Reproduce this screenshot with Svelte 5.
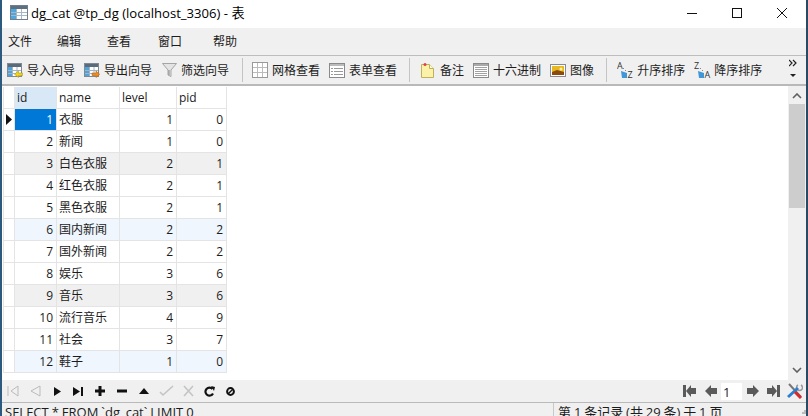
<script>
  const menus = ['文件', '编辑', '查看', '窗口', '帮助'];

  const rows = [
    [1, '衣服', 1, 0, ''],
    [2, '新闻', 1, 0, ''],
    [3, '白色衣服', 2, 1, 'gray'],
    [4, '红色衣服', 2, 1, ''],
    [5, '黑色衣服', 2, 1, ''],
    [6, '国内新闻', 2, 2, 'blue'],
    [7, '国外新闻', 2, 2, ''],
    [8, '娱乐', 3, 6, ''],
    [9, '音乐', 3, 6, 'gray'],
    [10, '流行音乐', 4, 9, ''],
    [11, '社会', 3, 7, ''],
    [12, '鞋子', 1, 0, 'blue']
  ];
</script>

{#snippet tableIcon(arrow)}
  <svg width="16" height="16" viewBox="0 0 16 16">
    <rect x="0.5" y="1.5" width="14" height="13" fill="#fff" stroke="#7d8a96" />
    <rect x="1" y="2" width="13" height="3" fill="#5a6b7c" />
    <rect x="1" y="5" width="4" height="9" fill="#4fa3d8" />
    <path d="M5.5 5v9M10 5v9M1 8.5h13M1 11.5h13" stroke="#9fb4c6" />
    {#if arrow === 'in'}
      <path d="M15.500 11h-4V9l-4 3.200 4 3.300v-2h4z" fill="#f5d313" stroke="#a08a10" stroke-width="0.5" />
    {:else}
      <path d="M8 11h4V9l3.700 3.200-3.700 3.300v-2H8z" fill="#f08a1d" stroke="#a85a10" stroke-width="0.5" />
    {/if}
  </svg>
{/snippet}

{#snippet sortIcon(first, last)}
  <svg width="17" height="18" viewBox="0 0 17 18">
    <path d="M4 10l6 2v5H5z" fill="#3f97d8" />
    <path d="M6 7.500h1M8 9.500h1" stroke="#888" />
    <text x="0" y="8" class="az">{first}</text>
    <text x="10.500" y="17" class="az">{last}</text>
  </svg>
{/snippet}

<div class="window">
  <header class="title">
    <svg width="18" height="15" viewBox="0 0 18 15">
      <rect x="0.5" y="0.5" width="17" height="14" fill="#fff" stroke="#6f7f8c" />
      <rect x="1" y="1" width="16" height="3" fill="#5d7080" />
      <rect x="1" y="4" width="5" height="10" fill="#4fa6dc" />
      <path d="M6.5 4v10M11.5 4v10M1 7.5h16M1 10.5h16" stroke="#a5b8c8" />
    </svg>
    <span>dg_cat @tp_dg (localhost_3306) - 表</span>
    <div class="controls">
      <svg width="10" height="10" viewBox="0 0 10 10"><path d="M0 5.5h10" stroke="#111" /></svg>
      <svg width="10" height="10" viewBox="0 0 10 10"><rect x="0.5" y="0.5" width="9" height="9" fill="none" stroke="#111" /></svg>
      <svg width="10" height="10" viewBox="0 0 10 10"><path d="M0 0l10 10M10 0L0 10" stroke="#111" /></svg>
    </div>
  </header>

  <nav class="menu">
    {#each menus as m}<span>{m}</span>{/each}
  </nav>

  <div class="toolbar">
    <div class="tool">{@render tableIcon('in')}导入向导</div>
    <div class="tool">{@render tableIcon('out')}导出向导</div>
    <div class="tool muted">
      <svg width="15" height="16" viewBox="0 0 15 16"><path d="M0.5 1.500h14L9 8v6.500L6 13V8z" fill="#e4e4e4" stroke="#a5a5a5" /><path d="M7 8v5" stroke="#888" /></svg>
      筛选向导
    </div>
    <i class="sep"></i>
    <div class="tool">
      <svg width="16" height="16" viewBox="0 0 16 16"><rect x="0.5" y="0.5" width="15" height="15" fill="#fff" stroke="#999" /><path d="M5.5 1v14M10.5 1v14M1 5.5h14M1 10.5h14" stroke="#bbb" /></svg>
      网格查看
    </div>
    <div class="tool">
      <svg width="16" height="15" viewBox="0 0 16 15"><rect x="0.5" y="0.5" width="15" height="14" fill="#fff" stroke="#8a8a8a" /><rect x="1" y="1" width="14" height="2" fill="#bbb" /><path d="M2 5.500h2M5 5.500h9M2 8.500h2M5 8.500h9M2 11.500h2M5 11.500h9" stroke="#999" /></svg>
      表单查看
    </div>
    <i class="sep wide"></i>
    <div class="tool note">
      <svg width="13" height="15" viewBox="0 0 13 15"><path d="M0.5 1.500h8l4 4v9h-12z" fill="#fbf1a8" stroke="#bfb25c" /><path d="M8.500 1.500v4h4" fill="#fffbd8" stroke="#bfb25c" /><circle cx="4" cy="1.500" r="1.500" fill="#e0404a" /></svg>
      备注
    </div>
    <div class="tool">
      <svg width="16" height="15" viewBox="0 0 16 15"><rect x="0.5" y="0.5" width="15" height="14" fill="#fff" stroke="#8a8a8a" /><rect x="1" y="1" width="14" height="2" fill="#aaa" /><path d="M3 4v9M5 4v9M7 4v9M9 4v9M11 4v9M13 4v9" stroke="#444" stroke-dasharray="1 1" /></svg>
      十六进制
    </div>
    <div class="tool">
      <svg width="16" height="13" viewBox="0 0 16 13"><rect x="0.5" y="0.5" width="15" height="12" fill="#fff" stroke="#8a8a8a" /><rect x="2" y="2" width="12" height="9" fill="#e8b820" /><path d="M2 8l5-2 7 2v3H2z" fill="#8a4a10" /><circle cx="11" cy="5" r="1.500" fill="#fff2a0" /></svg>
      图像
    </div>
    <i class="sep mid"></i>
    <div class="tool sort">{@render sortIcon('A', 'Z')}升序排序</div>
    <div class="tool sort">{@render sortIcon('Z', 'A')}降序排序</div>
    <div class="more">
      <svg width="8" height="20" viewBox="0 0 8 20"><path d="M0 1l3 3-3 3M4 1l3 3-3 3" fill="none" stroke="#222" stroke-width="1.200" /><path d="M1 15h6l-3 3z" fill="#222" /></svg>
    </div>
  </div>

  <main class="content">
    <div class="grid">
      <div class="row head">
        <span class="ind"></span>
        <span class="cell idh">id</span>
        <span class="cell">name</span>
        <span class="cell">level</span>
        <span class="cell">pid</span>
      </div>
      {#each rows as [id, name, level, pid, tone], i}
        <div class="row {tone}">
          <span class="ind">
            {#if i === 0}<svg width="6" height="11" viewBox="0 0 6 11"><path d="M0 0l6 5.500L0 11z" fill="#111" /></svg>{/if}
          </span>
          <span class="cell num" class:current={i === 0}>{id}</span>
          <span class="cell">{name}</span>
          <span class="cell num">{level}</span>
          <span class="cell num">{pid}</span>
        </div>
      {/each}
    </div>
    <div class="scrollbar">
      <svg width="10" height="6" viewBox="0 0 10 6"><path d="M1 5l4-4 4 4" fill="none" stroke="#606060" stroke-width="1.600" /></svg>
      <div class="thumb"></div>
      <svg class="down" width="10" height="6" viewBox="0 0 10 6"><path d="M1 1l4 4 4-4" fill="none" stroke="#606060" stroke-width="1.600" /></svg>
    </div>
  </main>

  <div class="nav">
    <div class="nav-left">
      <svg width="12" height="12" viewBox="0 0 12 12"><path d="M1 1v10M11 1L4 6l7 5z" fill="none" stroke="#bbb" /></svg>
      <svg width="11" height="12" viewBox="0 0 11 12"><path d="M10 1L1 6l9 5z" fill="none" stroke="#bbb" /></svg>
      <svg width="9" height="9" viewBox="0 0 9 9"><path d="M1 0l7 4.500L1 9z" fill="#111" /></svg>
      <svg width="11" height="9" viewBox="0 0 11 9"><path d="M0 0l7 4.500L0 9zM8 0h2v9H8z" fill="#111" /></svg>
      <svg width="10" height="10" viewBox="0 0 10 10"><path d="M3.500 0h3v3.500H10v3H6.500V10h-3V6.500H0v-3h3.500z" fill="#111" /></svg>
      <svg width="10" height="4" viewBox="0 0 10 4"><rect width="10" height="3" y="0.500" fill="#111" /></svg>
      <svg width="10" height="6" viewBox="0 0 10 6"><path d="M5 0l5 6H0z" fill="#111" /></svg>
      <svg width="15" height="12" viewBox="0 0 15 12"><path d="M1 7l3 3L14 1" fill="none" stroke="#c4c4c4" stroke-width="1.600" /></svg>
      <svg width="11" height="12" viewBox="0 0 11 12"><path d="M1 1l9 10M10 1L1 11" fill="none" stroke="#c4c4c4" stroke-width="1.600" /></svg>
      <svg width="11" height="11" viewBox="0 0 11 11"><path d="M9 7.500A4 4 0 1 1 8.500 3" fill="none" stroke="#111" stroke-width="2.200" /><path d="M7 0l4 1-1 4z" fill="#111" /></svg>
      <svg width="9" height="9" viewBox="0 0 9 9"><circle cx="4.500" cy="4.500" r="3.400" fill="none" stroke="#111" stroke-width="2" /><path d="M2 7l5-5" stroke="#111" stroke-width="1.500" /></svg>
    </div>
    <div class="nav-right">
      <svg width="13" height="12" viewBox="0 0 13 12"><path d="M0 0h3v12H0zM13 3H8V0L3 6l5 6V9h5z" fill="#5a5a5a" /></svg>
      <svg width="12" height="12" viewBox="0 0 12 12"><path d="M12 3H6V0L0 6l6 6V9h6z" fill="#5a5a5a" /></svg>
      <span class="page">1</span>
      <svg width="12" height="12" viewBox="0 0 12 12"><path d="M0 3h6V0l6 6-6 6V9H0z" fill="#5a5a5a" /></svg>
      <svg width="13" height="12" viewBox="0 0 13 12"><path d="M13 0h-3v12h3zM0 3h5V0l5 6-5 6V9H0z" fill="#5a5a5a" /></svg>
      <svg width="16" height="16" viewBox="0 0 16 16"><path d="M2 1l12 13" stroke="#777" stroke-width="2" /><path d="M14 2a3 3 0 1 1-3 0" fill="none" stroke="#999" stroke-width="1.500" /><path d="M11 5L1 14" stroke="#2a7fd0" stroke-width="3" /><path d="M8 9l6 6" stroke="#d92a2a" stroke-width="3" /></svg>
    </div>
  </div>

  <footer class="status">
    <span class="sql">SELECT * FROM `dg_cat` LIMIT 0</span>
    <span class="info">第 1 条记录 (共 29 条) 于 1 页</span>
    <svg class="grip" width="6" height="6" viewBox="0 0 6 6"><path d="M4 0h2v2H4zM2 2h2v2H2zM4 2h2v2H4z" fill="#bbb" /></svg>
  </footer>
</div>

<style>
  :global(body) {
    margin: 0;
    overflow: hidden;
  }

  .window {
    width: 808px;
    height: 416px;
    box-sizing: border-box;
    display: flex;
    flex-direction: column;
    overflow: hidden;
    border-left: 2px solid #2b5a7e;
    border-right: 2px solid #2b4a62;
    background: #f0f0f0;
    color: #1c1c1c;
    font-family: "Open Sans", "Noto Sans CJK SC", sans-serif;
    font-size: 12px;
  }

  .title {
    height: 28px;
    flex: none;
    display: flex;
    align-items: center;
    gap: 3px;
    padding: 0 0 3px 8px;
    box-sizing: border-box;
    background: #fff;
    font-size: 13.1px;
    color: #000;
  }

  .controls {
    margin-left: auto;
    display: flex;
    gap: 35px;
    padding-right: 19px;
  }

  .menu {
    height: 28px;
    flex: none;
    display: grid;
    grid-template-columns: 49px 50px 51px 55px 24px;
    align-items: center;
    padding: 0 0 1px 6px;
    border-bottom: 1px solid #bdbdbd;
    box-sizing: border-box;
  }

  .toolbar {
    height: 30px;
    flex: none;
    display: flex;
    align-items: center;
    gap: 9px;
    padding-left: 5px;
    box-sizing: border-box;
    border-bottom: 2px solid #b9b9b9;
    position: relative;
  }

  .tool {
    display: flex;
    align-items: center;
    gap: 4px;
    white-space: nowrap;
  }

  .tool.muted {
    margin-left: 1px;
  }

  .tool.note {
    gap: 6px;
  }

  .tool.sort {
    gap: 3px;
  }

  .sep {
    width: 1px;
    height: 24px;
    background: #c4c4c4;
    margin-left: 4px;
  }

  .sep.wide {
    margin: 0 2px 0 3px;
  }

  .sep.mid {
    margin: 0 1px 0 3px;
  }

  .az {
    font-size: 9px;
    fill: #333;
  }

  .more {
    position: absolute;
    right: 9px;
    top: 3px;
  }

  .content {
    flex: 1;
    min-height: 0;
    display: flex;
    background: #fff;
    padding-left: 1px;
  }

  .grid {
    flex: 1;
    padding-top: 1px;
  }

  .row {
    display: grid;
    grid-template-columns: 12px 42px 63px 57px 50px;
    height: 22px;
    width: 224px;
    box-sizing: border-box;
    border-bottom: 1px solid #e4e4e4;
  }

  .row.gray .cell {
    background: #f0f0f0;
  }

  .row.blue .cell {
    background: #eff6fd;
  }

  .cell {
    padding: 0 3px 0 2px;
    line-height: 21px;
    border-right: 1px solid #e4e4e4;
    white-space: nowrap;
  }

  .num {
    text-align: right;
  }

  .idh {
    background: #d9e8f6;
  }

  .current {
    background: #0078d7;
    color: #fff;
  }

  .ind {
    border-right: 1px solid #e4e4e4;
    border-left: 1px solid #e4e4e4;
    display: flex;
    align-items: center;
    padding-left: 2px;
    box-sizing: border-box;
  }

  .scrollbar {
    width: 18px;
    flex: none;
    display: flex;
    flex-direction: column;
    align-items: center;
    background: #f0f0f0;
    padding-top: 7px;
    box-sizing: border-box;
  }

  .thumb {
    width: 16px;
    height: 104px;
    margin-top: 5px;
    background: #cdcdcd;
  }

  .down {
    margin-top: auto;
    margin-bottom: 7px;
  }

  .nav {
    height: 23px;
    flex: none;
    display: flex;
    align-items: center;
    justify-content: space-between;
    box-sizing: border-box;
    border-bottom: 1px solid #b9b9b9;
    padding: 0 3px 0 5px;
  }

  .nav-left {
    display: grid;
    grid-template-columns: 23px 23px 20px 22px 22px 22px 20px 24px 21px 22px 9px;
    align-items: center;
  }

  .nav-right {
    display: grid;
    grid-template-columns: 22px 16px 26px 20px 20px 16px;
    align-items: center;
  }

  .page {
    width: 21px;
    height: 17px;
    background: #fff;
    line-height: 19px;
    font-size: 13px;
    padding-left: 2px;
    box-sizing: border-box;
  }

  .status {
    height: 13px;
    flex: none;
    display: flex;
    overflow: hidden;
    font-size: 13px;
    line-height: 18px;
  }

  .sql {
    width: 552px;
    padding-left: 3px;
    box-sizing: border-box;
    border-right: 1px solid #c8c8c8;
    white-space: nowrap;
    word-spacing: -0.4px;
  }

  .info {
    padding-left: 4px;
    white-space: nowrap;
    word-spacing: -0.5px;
  }

  .grip {
    margin: 7px 0 0 auto;
  }
</style>
